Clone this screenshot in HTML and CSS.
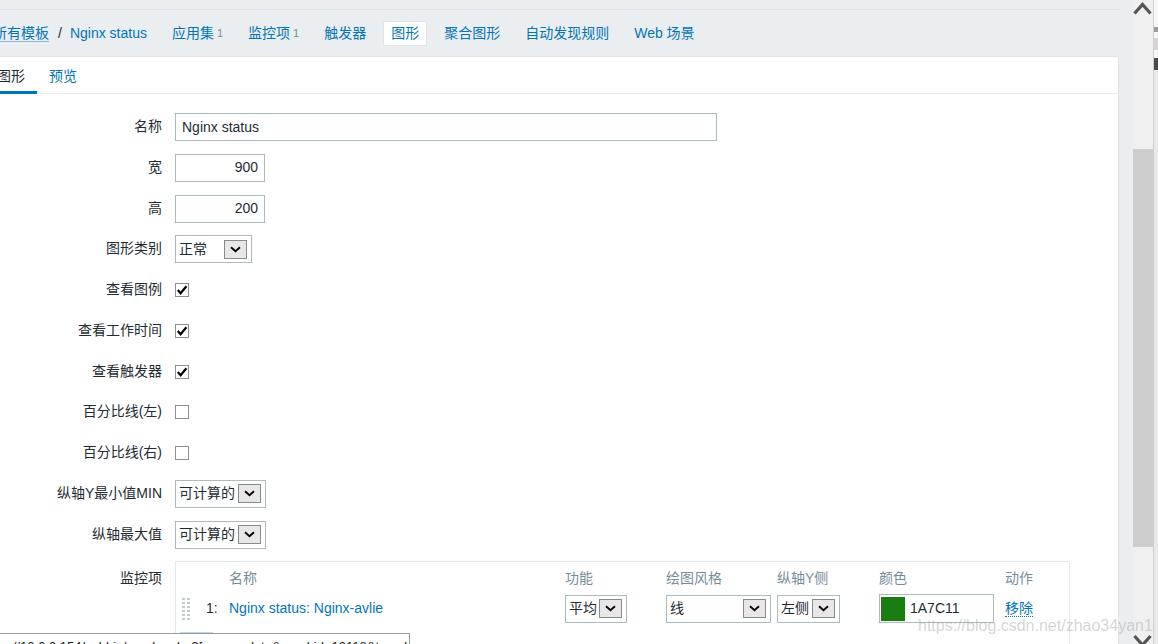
FILE: index.html
```html
<!DOCTYPE html>
<html lang="zh-CN">
<head>
<meta charset="utf-8">
<title>Nginx status - 图形</title>
<link rel="stylesheet" href="styles.css">
</head>
<body>
<div class="window">
  <div class="page">
    <div class="topstrip"></div>
    <nav class="nav">
      <a class="crumb first">所有模板</a><span class="sep">/</span><a class="crumb">Nginx status</a>
      <ul class="navlist">
        <li class="navitem"><a>应用集</a><sup class="count">1</sup></li>
        <li class="navitem"><a>监控项</a><sup class="count">1</sup></li>
        <li class="navitem"><a>触发器</a></li>
        <li class="navitem selected"><a>图形</a></li>
        <li class="navitem"><a>聚合图形</a></li>
        <li class="navitem"><a>自动发现规则</a></li>
        <li class="navitem"><a>Web 场景</a></li>
      </ul>
    </nav>
    <div class="content">
      <div class="tabs">
        <span class="tab first active">图形</span>
        <span class="tab">预览</span>
      </div>
      <form class="form">
        <label class="lbl">名称</label>
        <div class="field"><input class="text name" type="text" value="Nginx status"></div>

        <label class="lbl">宽</label>
        <div class="field"><input class="text num" type="text" value="900"></div>

        <label class="lbl">高</label>
        <div class="field"><input class="text num" type="text" value="200"></div>

        <label class="lbl">图形类别</label>
        <div class="field"><div class="select w-type"><span class="val">正常</span><span class="btn"><svg viewBox="0 0 23 19" width="21" height="17"><polyline points="6.5,7 11.5,11.5 16.5,7" fill="none" stroke="#000" stroke-width="2"/></svg></span></div></div>

        <label class="lbl">查看图例</label>
        <div class="field"><span class="cb"><svg viewBox="0 0 12 12" width="12" height="12"><polyline points="1.8,6 4.6,9.2 10.4,2.3" fill="none" stroke="#000" stroke-width="2.2"/></svg></span></div>

        <label class="lbl">查看工作时间</label>
        <div class="field"><span class="cb"><svg viewBox="0 0 12 12" width="12" height="12"><polyline points="1.8,6 4.6,9.2 10.4,2.3" fill="none" stroke="#000" stroke-width="2.2"/></svg></span></div>

        <label class="lbl">查看触发器</label>
        <div class="field"><span class="cb"><svg viewBox="0 0 12 12" width="12" height="12"><polyline points="1.8,6 4.6,9.2 10.4,2.3" fill="none" stroke="#000" stroke-width="2.2"/></svg></span></div>

        <label class="lbl">百分比线(左)</label>
        <div class="field"><span class="cb"></span></div>

        <label class="lbl">百分比线(右)</label>
        <div class="field"><span class="cb"></span></div>

        <label class="lbl">纵轴Y最小值MIN</label>
        <div class="field"><div class="select w-calc"><span class="val">可计算的</span><span class="btn"><svg viewBox="0 0 23 19" width="21" height="17"><polyline points="6.5,7 11.5,11.5 16.5,7" fill="none" stroke="#000" stroke-width="2"/></svg></span></div></div>

        <label class="lbl">纵轴最大值</label>
        <div class="field"><div class="select w-calc"><span class="val">可计算的</span><span class="btn"><svg viewBox="0 0 23 19" width="21" height="17"><polyline points="6.5,7 11.5,11.5 16.5,7" fill="none" stroke="#000" stroke-width="2"/></svg></span></div></div>

        <label class="lbl top">监控项</label>
        <div class="items">
          <div class="irow head">
            <span></span><span></span>
            <span>名称</span><span>功能</span><span>绘图风格</span><span>纵轴Y侧</span><span>颜色</span><span>动作</span>
          </div>
          <div class="irow data">
            <span class="handle"><svg viewBox="0 0 8 22" width="8" height="22"><g fill="#c3cbd0"><rect x="0" y="0" width="3" height="2"/><rect x="5" y="0" width="3" height="2"/><rect x="0" y="4" width="3" height="2"/><rect x="5" y="4" width="3" height="2"/><rect x="0" y="8" width="3" height="2"/><rect x="5" y="8" width="3" height="2"/><rect x="0" y="12" width="3" height="2"/><rect x="5" y="12" width="3" height="2"/><rect x="0" y="16" width="3" height="2"/><rect x="5" y="16" width="3" height="2"/><rect x="0" y="20" width="3" height="2"/><rect x="5" y="20" width="3" height="2"/></g></svg></span>
            <span class="num-cell">1:</span>
            <span><a class="link">Nginx status: Nginx-avlie</a></span>
            <span><div class="select w-func"><span class="val">平均</span><span class="btn"><svg viewBox="0 0 23 19" width="21" height="17"><polyline points="6.5,7 11.5,11.5 16.5,7" fill="none" stroke="#000" stroke-width="2"/></svg></span></div></span>
            <span><div class="select w-style"><span class="val">线</span><span class="btn"><svg viewBox="0 0 23 19" width="21" height="17"><polyline points="6.5,7 11.5,11.5 16.5,7" fill="none" stroke="#000" stroke-width="2"/></svg></span></div></span>
            <span><div class="select w-side"><span class="val">左侧</span><span class="btn"><svg viewBox="0 0 23 19" width="21" height="17"><polyline points="6.5,7 11.5,11.5 16.5,7" fill="none" stroke="#000" stroke-width="2"/></svg></span></div></span>
            <span><div class="color"><span class="swatch"></span><span class="hex">1A7C11</span></div></span>
            <span><a class="remove">移除</a></span>
          </div>
          <div class="irow add"><span class="addbtn"></span></div>
        </div>
      </form>
    </div>
  </div>
  <div class="scrollbar">
    <div class="sb-up"><svg viewBox="0 0 20 17" width="20" height="17"><polyline points="1.5,13.5 9.5,4.5 17.5,13.5" fill="none" stroke="#555" stroke-width="3.2"/></svg></div>
    <div class="sb-gap"></div>
    <div class="sb-thumb"></div>
    <div class="sb-rest"></div>
    <div class="sb-down"><svg viewBox="0 0 20 12" width="20" height="12"><polyline points="1.5,4 9.5,13 17.5,4" fill="none" stroke="#555" stroke-width="3.2"/></svg></div>
  </div>
  <div class="edge">
    <div class="e-gap1"></div>
    <div class="e-bar"></div>
    <div class="e-box"></div>
    <div class="e-gap2"></div>
    <div class="e-dark"></div>
    <div class="e-rest"></div>
  </div>
</div>
<div class="watermark">https://blog.csdn.net/zhao34yan1</div>
<div class="status">p://10.0.0.154/zabbix/graphs.php?form=update&amp;graphid=10118&amp;templateid=10118</div>
</body>
</html>
```
FILE: styles.css
```css
* { box-sizing: border-box; }
html, body { margin: 0; padding: 0; }
body {
  width: 1158px;
  height: 644px;
  overflow: hidden;
  position: relative;
  background: #ebeef1;
  font-family: "Liberation Sans", "Noto Sans CJK SC", sans-serif;
  font-size: 14px;
  line-height: 17px;
  color: #1f2c33;
}
a { color: #0275b8; text-decoration: none; }

.window { display: flex; height: 644px; }
.page {
  width: 1133px;
  flex: none;
  display: flex;
  flex-direction: column;
  padding-right: 14px;
  overflow: hidden;
}
.topstrip { height: 10px; flex: none; border-bottom: 1px solid #dde2e6; }

/* top navigation */
.nav { height: 46px; flex: none; display: flex; align-items: center; white-space: nowrap; }
.crumb { line-height: 16px; }
.crumb.first { margin-left: -7px; border-bottom: 1px solid #8dbbe0; }
.sep { margin: 0 8px 0 9px; color: #1f2c33; }
.navlist { list-style: none; margin: 0 0 0 17px; padding: 0; display: flex; gap: 9px; }
.navitem {
  height: 25px;
  display: flex;
  align-items: center;
  padding: 0 7px;
  border: 1px solid transparent;
  border-radius: 2px;
}
.navitem.selected { background: #fff; border-color: #dfe4e7; }
.count { font-size: 11px; color: #768d99; margin-left: 3px; vertical-align: baseline; line-height: 11px; }

/* content */
.content {
  flex: 1;
  background: #fff;
  border-top: 1px solid #dfe4e7;
  border-right: 1px solid #dfe4e7;
}
.tabs { display: flex; height: 37px; border-bottom: 1px solid #ebeef1; }
.tab {
  height: 37px;
  margin-bottom: -1px;
  padding: 4px 12px 0;
  border-bottom: 3px solid transparent;
  display: flex;
  align-items: center;
  color: #0275b8;
}
.tab.first { margin-left: -15px; }
.tab.active { color: #1f2c33; border-bottom-color: #0275b8; }

.form {
  padding-top: 19px;
  display: grid;
  grid-template-columns: 162px 1fr;
  column-gap: 13px;
  row-gap: 12.75px;
}
.lbl {
  height: 28px;
  display: flex;
  align-items: center;
  justify-content: flex-end;
  white-space: nowrap;
  padding-bottom: 1px;
}
.lbl.top { align-items: flex-start; padding-top: 9px; }
.field { height: 28px; display: flex; align-items: center; }

.text {
  height: 28px;
  border: 1px solid #acbbc2;
  padding: 0 6px 1px;
  font: inherit;
  color: #1f2c33;
  background: #fff;
  outline: none;
  margin: 0;
}
.text.name { width: 542px; }
.text.num { width: 90px; text-align: right; }

.select {
  height: 28px;
  display: flex;
  align-items: center;
  border: 1px solid #acbbc2;
  background: #fff;
  padding: 0 4px 0 3px;
  white-space: nowrap;
}
.select .val { flex: 1; }
.select .btn {
  width: 23px;
  height: 19px;
  flex: none;
  border: 1px solid #8a8a8a;
  background: #e7e7e7;
  display: flex;
  align-items: center;
  justify-content: center;
}
.w-type { width: 77px; }
.w-calc { width: 91px; }
.w-func { width: 62px; }
.w-style { width: 105px; }
.w-side { width: 63px; }

.cb {
  width: 14px;
  height: 14px;
  border: 1px solid #8f8f8f;
  background: #fff;
  display: flex;
  align-items: center;
  justify-content: center;
}

/* items table */
.items {
  width: 895px;
  border: 1px solid #e4e8eb;
  border-bottom: none;
  padding: 8px 0 0 6px;
}
.irow {
  display: grid;
  grid-template-columns: 24px 23px 336px 101px 111px 102px 126px auto;
  align-items: center;
}
.irow.head { color: #768d99; }
.irow.data { margin-top: 7px; height: 28px; }
.handle { display: flex; }
.link { color: #0275b8; }
.color {
  width: 115px;
  height: 29px;
  display: flex;
  align-items: center;
  border: 1px solid #acbbc2;
  padding-left: 1px;
}
.swatch { width: 24px; height: 24px; background: #1a7c11; }
.hex { margin-left: 5px; }
.remove { border-bottom: 1px dotted #0275b8; }
.irow.add { margin-top: 10px; display: flex; }
.addbtn { width: 33px; height: 20px; margin-left: -2px; background: #bcd6ee; }

/* scrollbar */
.scrollbar { width: 20px; flex: none; background: #f0f0f0; display: flex; flex-direction: column; }
.sb-up { height: 17px; display: flex; }
.sb-gap { height: 132px; }
.sb-thumb { height: 398px; background: #cdcdcd; }
.sb-rest { flex: 1; }
.sb-down { height: 12px; display: flex; overflow: hidden; }

.edge { width: 5px; flex: none; background: #f6f6f6; border-left: 1px solid #cfcfcf; display: flex; flex-direction: column; }
.e-gap1 { height: 27px; }
.e-bar { height: 5px; background: #9c9c9c; }
.e-box { height: 12px; margin-top: 6px; background: #d8d2d6; }
.e-gap2 { height: 8px; }
.e-dark { height: 12px; background: #4a4a4a; }
.e-rest { flex: 1; background: #e9e9e9; }

/* overlays */
.watermark {
  position: absolute;
  left: 918px;
  top: 618px;
  font-size: 16px;
  line-height: 16px;
  color: rgba(160, 160, 160, 0.45);
  white-space: nowrap;
  pointer-events: none;
}
.status {
  position: absolute;
  left: 0;
  top: 633px;
  width: 410px;
  height: 20px;
  border-top: 1px solid #9a9a9a;
  border-right: 1px solid #9a9a9a;
  background: #fff;
  padding: 5px 0 0 2px;
  font-size: 13px;
  line-height: 16px;
  color: #222;
  white-space: nowrap;
  overflow: hidden;
}
```
